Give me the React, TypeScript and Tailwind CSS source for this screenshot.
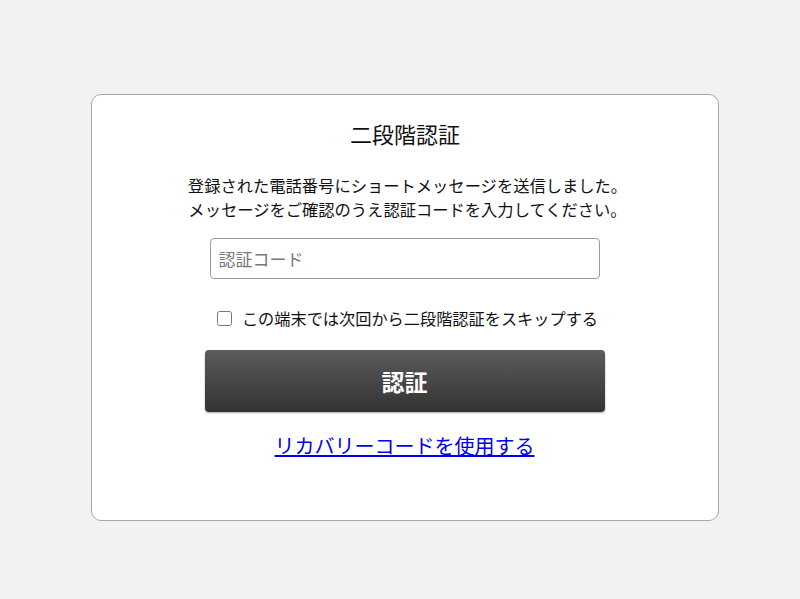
import { useState } from 'react'

export default function App() {
  const [code, setCode] = useState('')
  const [skip, setSkip] = useState(false)

  return (
    <div className="min-h-[599px] bg-[#f2f2f2] pt-[94px] pl-[91px] font-['Noto_Sans_CJK_JP','Noto_Sans',sans-serif] text-[#111]">
      <div className="w-[628px] rounded-[10px] border border-[#a8a8a8] bg-white pt-[23px] pb-[59px] flex flex-col items-center">
        <h1 className="text-[22px] leading-[30px] font-normal">二段階認証</h1>
        <p className="mt-[25px] text-[16.3px] leading-[24px] text-center ml-[5px]">
          登録された電話番号にショートメッセージを送信しました。
          <br />
          メッセージをご確認のうえ認証コードを入力してください。
        </p>
        <input
          value={code}
          onChange={(e) => setCode(e.target.value)}
          placeholder="認証コード"
          className="mt-[17px] ml-[-1px] h-[41px] w-[390px] rounded-[4px] border border-[#9a9a9a] px-[8px] text-[17px] outline-none placeholder:text-[#777]"
        />
        <label className="mt-[27px] flex items-center gap-[10px] text-[16.2px] leading-[24px] ml-[5px]">
          <input
            type="checkbox"
            checked={skip}
            onChange={(e) => setSkip(e.target.checked)}
            className="h-[15px] w-[15px] accent-[#555]"
          />
          この端末では次回から二段階認証をスキップする
        </label>
        <button className="mt-[20px] ml-[-1px] h-[62px] w-[400px] rounded-[4px] bg-linear-to-b from-[#5c5c5c] to-[#333] text-[23px] font-bold text-white shadow-[0_1px_2px_rgba(0,0,0,0.35)]">
          認証
        </button>
        <a href="#" className="mt-[19px] text-[20px] leading-[30px] text-[#0000ee] underline ml-[-1px]">
          リカバリーコードを使用する
        </a>
      </div>
    </div>
  )
}
